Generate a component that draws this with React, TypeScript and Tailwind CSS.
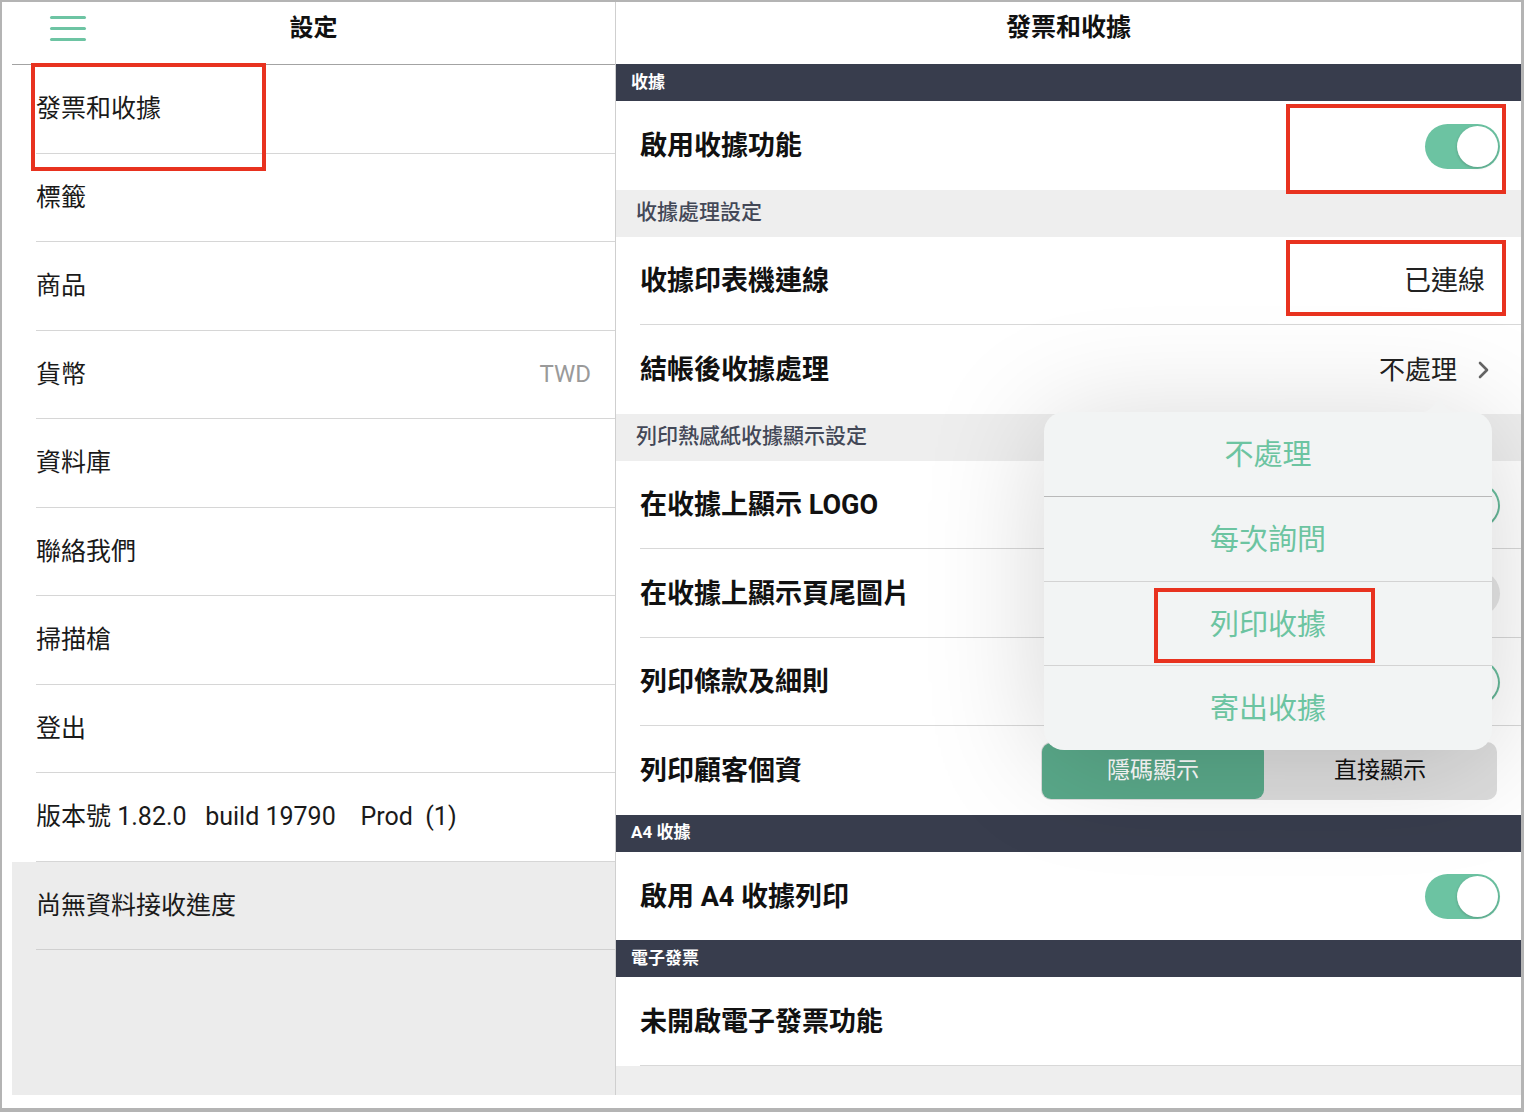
import React from "react";

const FONT = { fontFamily: 'Roboto, "Noto Sans CJK TC", "Noto Sans", sans-serif' };

function Toggle({ on = true }: { on?: boolean }) {
  return (
    <div
      className={
        on
          ? "flex h-[45px] w-[75px] items-center justify-end rounded-full bg-[#6cc3a2] p-[2px]"
          : "flex h-[45px] w-[75px] items-center justify-start rounded-full bg-[#e6e6e6] p-[2px]"
      }
    >
      <div className="h-[41px] w-[41px] rounded-full bg-white shadow-[0_1px_3px_rgba(0,0,0,0.2)]" />
    </div>
  );
}

function LeftRow({ label, value }: { label: string; value?: string }) {
  return (
    <div className="pl-6">
      <div className="flex h-[88.5px] items-center justify-between border-b border-[#d6d6d6] pr-6">
        <span className="whitespace-pre text-[25px] text-[#1a1a1a]">{label}</span>
        {value && <span className="text-[24px] text-[#9a9a9a]">{value}</span>}
      </div>
    </div>
  );
}

function DarkBar({ label }: { label: string }) {
  return (
    <div className="flex h-[37px] items-center bg-[#383d4d] pl-[15px] text-[17px] font-bold text-white">
      {label}
    </div>
  );
}

function SubHeader({ label }: { label: string }) {
  return (
    <div className="flex h-[47px] items-center bg-[#eeeeee] pl-5 text-[21px] font-medium text-[#434857]">
      {label}
    </div>
  );
}

function RightRow({
  label,
  children,
  line = true,
  pr = "pr-[21px]",
}: {
  label: string;
  children?: React.ReactNode;
  line?: boolean;
  pr?: string;
}) {
  return (
    <div className="bg-white pl-6">
      <div
        className={
          "box-border flex h-[88.5px] items-center justify-between pt-[2px] " +
          pr +
          (line ? " border-b border-[#d8d8d8]" : "")
        }
      >
        <span className="text-[27px] font-bold text-[#111]">{label}</span>
        {children}
      </div>
    </div>
  );
}

function Chevron() {
  return (
    <svg width="14" height="20" viewBox="0 0 14 20" fill="none">
      <path d="M3 3l7 7-7 7" stroke="#666" strokeWidth="2.6" strokeLinecap="round" strokeLinejoin="round" />
    </svg>
  );
}

function ActionPopover() {
  const items = ["不處理", "每次詢問", "列印收據", "寄出收據"];
  return (
    <div className="absolute left-[428px] top-[410px] w-[448px]">
      <svg className="absolute left-[373px] top-[-19px]" width="44" height="20" viewBox="0 0 44 20">
        <path d="M0 20 C10 20 14 16 18 10 L20 7 C21 5.5 23 5.5 24 7 L26 10 C30 16 34 20 44 20 Z" fill="#f2f3f3" />
      </svg>
      <div className="flex h-[338px] flex-col overflow-hidden rounded-[20px] bg-[#f2f4f4] shadow-[0_10px_120px_rgba(0,0,0,0.17)]">
        {items.map((t, i) => (
          <div
            key={t}
            className={
              "flex flex-1 items-center justify-center pt-[4px] text-[29px] text-[#6cc4a1]" +
              (i < items.length - 1 ? (i === 0 ? " border-b border-[#b9b9b9]" : " border-b border-[#d3d3d3]") : "")
            }
          >
            {t}
          </div>
        ))}
      </div>
    </div>
  );
}

export default function App() {
  return (
    <div className="relative h-[1112px] w-[1524px] overflow-hidden bg-white" style={FONT}>
      <div className="flex h-full w-full border-b-4 border-l-2 border-r-[3px] border-t-2 border-[#b4b4b4] bg-white pb-[13px] pl-[10px]">
        {/* settings menu */}
        <div className="flex w-[604px] flex-col border-r border-[#cfcfcf]">
          <div className="grid h-[63px] grid-cols-[1fr_auto_1fr] items-center border-b border-[#a3a3a3] pb-[10px]">
            <div className="flex flex-col gap-[8px] pl-[38px]">
              <div className="h-[3px] w-[36px] rounded-full bg-[#6dc4a3]" />
              <div className="h-[3px] w-[36px] rounded-full bg-[#6dc4a3]" />
              <div className="h-[3px] w-[36px] rounded-full bg-[#6dc4a3]" />
            </div>
            <div className="text-[24px] font-bold text-[#111]">設定</div>
            <div />
          </div>
          <LeftRow label="發票和收據" />
          <LeftRow label="標籤" />
          <LeftRow label="商品" />
          <LeftRow label="貨幣" value="TWD" />
          <LeftRow label="資料庫" />
          <LeftRow label="聯絡我們" />
          <LeftRow label="掃描槍" />
          <LeftRow label="登出" />
          <LeftRow label={"版本號 1.82.0   build 19790    Prod  (1)"} />
          <div className="flex-1 bg-[#ececec] pl-6">
            <div className="flex h-[88.5px] items-center border-b border-[#d0d0d0] text-[25px] text-[#1a1a1a]">
              尚無資料接收進度
            </div>
          </div>
        </div>

        {/* invoice & receipt settings */}
        <div className="relative flex flex-1 flex-col bg-[#eeeeee]">
          <div className="flex h-[62px] items-center justify-center bg-white pb-[10px] text-[25px] font-bold text-[#111]">
            發票和收據
          </div>
          <DarkBar label="收據" />
          <RightRow label="啟用收據功能" line={false}>
            <Toggle />
          </RightRow>
          <SubHeader label="收據處理設定" />
          <RightRow label="收據印表機連線" pr="pr-[36px]">
            <span className="text-[27px] text-[#222]">已連線</span>
          </RightRow>
          <RightRow label="結帳後收據處理" line={false} pr="pr-[30px]">
            <span className="flex items-center gap-[20px] text-[26px] text-[#222]">
              不處理
              <Chevron />
            </span>
          </RightRow>
          <SubHeader label="列印熱感紙收據顯示設定" />
          <RightRow label="在收據上顯示 LOGO">
            <Toggle />
          </RightRow>
          <RightRow label="在收據上顯示頁尾圖片">
            <Toggle on={false} />
          </RightRow>
          <RightRow label="列印條款及細則">
            <Toggle />
          </RightRow>
          <RightRow label="列印顧客個資" line={false} pr="pr-[24px]">
            <div className="flex h-[58px] w-[456px] rounded-[10px] bg-[#dddddd] p-[1px]">
              <div className="flex w-[222px] items-center justify-center rounded-[9px] bg-[#5aa98a] text-[23px] text-white">
                隱碼顯示
              </div>
              <div className="flex flex-1 items-center justify-center text-[23px] text-[#111]">直接顯示</div>
            </div>
          </RightRow>
          <DarkBar label="A4 收據" />
          <RightRow label="啟用 A4 收據列印" line={false}>
            <Toggle />
          </RightRow>
          <DarkBar label="電子發票" />
          <RightRow label="未開啟電子發票功能" pr="pr-0" />
          <div className="flex-1" />
          <ActionPopover />
        </div>
      </div>

      {/* annotation boxes */}
      <div className="absolute left-[31px] top-[63px] h-[108px] w-[235px] border-4 border-[#e8321f]" />
      <div className="absolute left-[1286px] top-[104px] h-[90px] w-[220px] border-4 border-[#e8321f]" />
      <div className="absolute left-[1286px] top-[240px] h-[76px] w-[220px] border-4 border-[#e8321f]" />
      <div className="absolute left-[1154px] top-[588px] h-[75px] w-[221px] border-4 border-[#e8321f]" />
    </div>
  );
}
